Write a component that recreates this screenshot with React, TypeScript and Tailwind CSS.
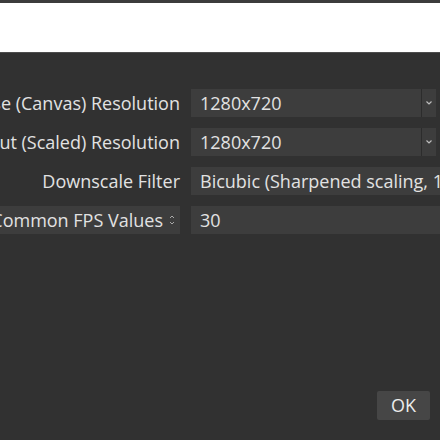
import React from 'react';

const font = { fontFamily: '"Open Sans", "Noto Sans", sans-serif' };

const Chevron = () => (
    <svg width="8" height="6" viewBox="0 0 8 6" className="text-[#bdbdbd]">
        <path d="M1.5 1.5 L4 4 L6.5 1.5" fill="none" stroke="currentColor" strokeWidth="1.2" />
    </svg>
);

const UpDown = () => (
    <svg width="6" height="12" viewBox="0 0 6 12" className="text-[#a8a8a8]">
        <path d="M1 4 L3 2 L5 4 M1 8 L3 10 L5 8" fill="none" stroke="currentColor" strokeWidth="1" />
    </svg>
);

const rows = [
    { label: 'Base (Canvas) Resolution', value: '1280x720', combo: true },
    { label: 'Output (Scaled) Resolution', value: '1280x720', combo: true },
    { label: 'Downscale Filter', value: 'Bicubic (Sharpened scaling, 16 samples)', combo: false },
];

export default function App() {
    return (
        <div className="w-[440px] h-[440px] overflow-hidden bg-[#313131] text-[#e2e2e2] flex flex-col text-[18px]" style={font}>
            <div className="h-[3px] bg-[#3c3c3c]" />
            <div className="h-[49px] bg-white" />
            <div className="h-px bg-[#4d4d4d]" />

            <div className="flex flex-col gap-[11px] pt-[36px]">
                {rows.map(row => (
                    <div key={row.label} className="flex items-center gap-[11px] h-[28px]">
                        <div className="w-[180px] shrink-0 flex justify-end whitespace-nowrap">{row.label}</div>
                        <div className={`flex-1 h-full bg-[#3d3d3d] flex items-center min-w-0 ${row.combo ? 'mr-[4px]' : '-mr-[20px]'}`}>
                            <span className="pl-[9px] flex-1 whitespace-nowrap overflow-hidden">{row.value}</span>
                            {row.combo && (
                                <div className="w-[15px] h-full border-l border-[#2c2c2c] flex items-center justify-center">
                                    <Chevron />
                                </div>
                            )}
                        </div>
                    </div>
                ))}
                <div className="flex items-center gap-[11px] h-[28px]">
                    <div className="w-[180px] shrink-0 flex justify-end">
                        <div className="h-[28px] bg-[#3d3d3d] flex items-center whitespace-nowrap pl-[9px]">
                            <span>Common FPS Values</span>
                            <span className="w-[17px] flex justify-center"><UpDown /></span>
                        </div>
                    </div>
                    <div className="flex-1 h-full bg-[#3d3d3d] flex items-center -mr-[20px]">
                        <span className="pl-[9px]">30</span>
                    </div>
                </div>
            </div>

            <div className="flex-1" />
            <div className="flex justify-end pr-[10px] pb-[20px]">
                <button className="w-[53px] h-[29px] bg-[#464646] rounded-[2px] text-[#ececec]">OK</button>
            </div>
        </div>
    );
}
